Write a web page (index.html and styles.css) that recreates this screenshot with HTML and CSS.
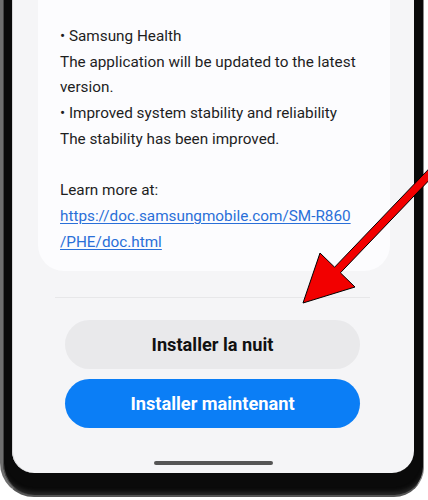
FILE: index.html
```html
<!DOCTYPE html>
<html lang="en">
<head>
<meta charset="utf-8">
<title>Software update</title>
<link rel="stylesheet" href="styles.css">
</head>
<body>
<div class="phone">
  <div class="screen">
    <div class="card">
      <p class="line">• Samsung Health</p>
      <p class="line">The application will be updated to the latest version.</p>
      <p class="line">• Improved system stability and reliability</p>
      <p class="line">The stability has been improved.</p>
      <p class="line blank">&nbsp;</p>
      <p class="line">Learn more at:</p>
      <p class="line"><a class="link" href="#">https://doc.samsungmobile.com/SM-R860<br>/PHE/doc.html</a></p>
    </div>
    <div class="divider"></div>
    <div class="actions">
      <button class="btn btn-secondary">Installer la nuit</button>
      <button class="btn btn-primary">Installer maintenant</button>
    </div>
    <div class="home-bar"></div>
  </div>
</div>
<svg class="arrow" width="428" height="500" viewBox="0 0 428 500">
  <polygon points="303,303 320,253 334.6,267.2 438.4,158.9 444.2,164.5 340.4,272.8 355,287" fill="#f20000" stroke="#000" stroke-width="1" stroke-linejoin="miter"/>
</svg>
</body>
</html>
```

FILE: styles.css
```css
html, body {
  margin: 0;
  padding: 0;
}

body {
  width: 428px;
  height: 500px;
  overflow: hidden;
  background: #ffffff;
  position: relative;
  font-family: Roboto, "Noto Sans", "Liberation Sans", sans-serif;
}

.phone {
  width: 424px;
  height: 497px;
  box-sizing: border-box;
  background: #0a0a0a;
  border-left: 3px solid #6e6e6e;
  border-right: 1px solid #8a8a8a;
  border-bottom: 2px solid #555;
  border-radius: 0 0 30px 34px;
  padding: 0 9px 22px 9px;
  box-shadow: inset 1px 0 0 #444, inset 0 -6px 4px -3px #2a2a2a;
}

.screen {
  height: 473px;
  width: 402px;
  background: #f5f5f7;
  border-radius: 0 0 22px 22px;
  display: flex;
  flex-direction: column;
  overflow: hidden;
  box-shadow: inset 1px 0 0 #d8d8da;
}

.card {
  margin: 0 24px 0 26px;
  padding: 24px 20px 16px 22px;
  background: #fcfcfe;
  border-radius: 0 0 26px 26px;
}

.line {
  margin: 0;
  font-size: 15.3px;
  line-height: 25.7px;
  color: #1e1e1e;
}

.link {
  color: #2a6fd8;
  text-decoration: underline;
  text-underline-offset: 2px;
}

.divider {
  height: 1px;
  background: #e7e7e9;
  margin: 26px 44px 0 43px;
}

.actions {
  display: flex;
  flex-direction: column;
  gap: 10px;
  margin: 22px 54px 0 53px;
}

.btn {
  height: 49px;
  border: none;
  border-radius: 25px;
  font-family: Roboto, "Noto Sans", "Liberation Sans", sans-serif;
  font-weight: 700;
  font-size: 18.2px;
  padding: 0;
}

.btn-secondary {
  background: #e9e9eb;
  color: #111111;
}

.btn-primary {
  background: #0b7ef6;
  color: #ffffff;
}

.home-bar {
  align-self: center;
  width: 119px;
  height: 4px;
  border-radius: 2px;
  background: #555555;
  margin-top: 33px;
}

.arrow {
  position: absolute;
  left: 0;
  top: 0;
  pointer-events: none;
}
```
